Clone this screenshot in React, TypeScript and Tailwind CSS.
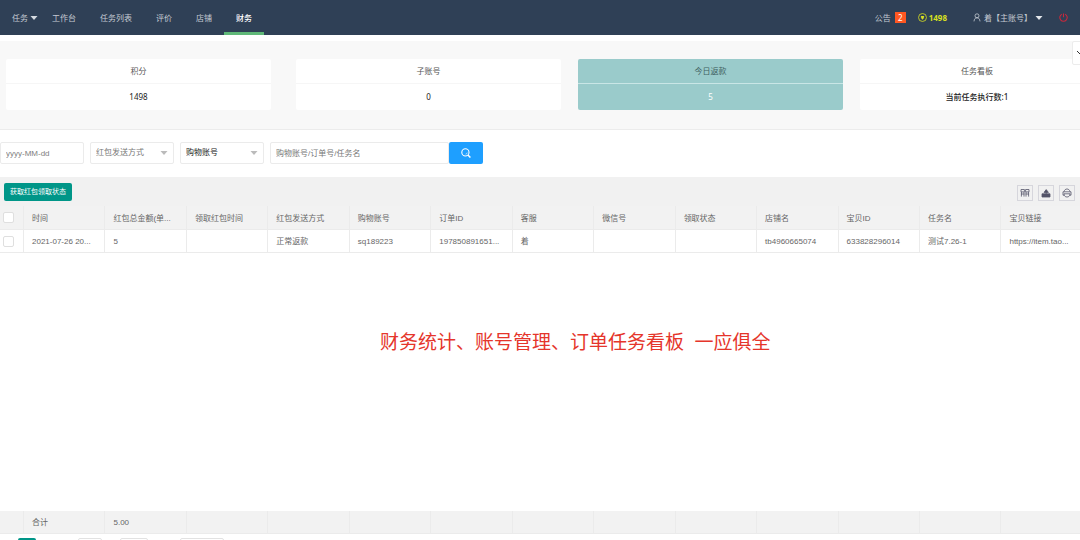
import type { ReactNode } from "react";

const navItems = ["任务", "工作台", "任务列表", "评价", "店铺", "财务"];

const columns = [
  { title: "时间", value: "2021-07-26 20...", total: "合计" },
  { title: "红包总金额(单...", value: "5", total: "5.00" },
  { title: "领取红包时间", value: "", total: "" },
  { title: "红包发送方式", value: "正常返款", total: "" },
  { title: "购物账号", value: "sq189223", total: "" },
  { title: "订单ID", value: "197850891651...", total: "" },
  { title: "客服", value: "着", total: "" },
  { title: "微信号", value: "", total: "" },
  { title: "领取状态", value: "", total: "" },
  { title: "店铺名", value: "tb4960665074", total: "" },
  { title: "宝贝ID", value: "633828296014", total: "" },
  { title: "任务名", value: "测试7.26-1", total: "" },
  { title: "宝贝链接", value: "https://item.tao...", total: "" },
];

const Caret = ({ className }: { className: string }) => (
  <svg viewBox="0 0 8 4" className={`h-1 w-2 ${className}`} fill="currentColor">
    <path d="M0.5 0h7L4 4z" />
  </svg>
);

const TopNav = () => (
  <header className="flex h-[35px] shrink-0 items-stretch justify-between bg-[#2f4056] text-[#c5cbd3]">
    <nav className="flex">
      {navItems.map((item) => {
        const active = item === "财务";
        return (
          <a key={item} href="#" className={`relative flex items-center px-3 ${active ? "font-medium text-white" : ""}`}>
            {item}
            {item === "任务" && <Caret className="absolute right-0.5 text-[#d5dae0]" />}
            {active && <span className="absolute inset-x-0 bottom-0 h-[3px] bg-[#5fb878]" />}
          </a>
        );
      })}
    </nav>
    <div className="flex items-center pr-3">
      <a href="#" className="flex items-center gap-1">
        公告
        <span className="h-[11px] w-[11px] bg-[#ff5722] text-center leading-[11px] text-white">2</span>
      </a>
      <span className="ml-3 flex items-center gap-0.5 font-bold text-[#d9e021]">
        <svg viewBox="0 0 10 10" className="h-[9px] w-[9px]" fill="none" stroke="currentColor">
          <circle cx="5" cy="5" r="4.4" strokeWidth="0.9" />
          <path d="M3 3.2h4L6.2 5H7L5 7.4 3 5h0.8z" fill="currentColor" stroke="none" />
        </svg>
        1498
      </span>
      <a href="#" className="ml-[26px] flex items-center gap-[3px]">
        <svg viewBox="0 0 8 9" className="h-[9px] w-2" fill="none" stroke="currentColor" strokeWidth="0.8">
          <circle cx="4" cy="2.8" r="2" />
          <path d="M1 8.4c0.2-2.4 1.2-3.6 3-3.6s2.8 1.2 3 3.6" />
        </svg>
        着【主账号】
        <Caret className="text-[#e4e7eb]" />
      </a>
      <button type="button" aria-label="退出" className="ml-4 text-[#c8283c]">
        <svg viewBox="0 0 10 10" className="h-[9px] w-[9px]" fill="none" stroke="currentColor" strokeWidth="1.2">
          <path d="M3.2 1.3a4.1 4.1 0 1 0 3.6 0M5 0.6v4" />
        </svg>
      </button>
    </div>
  </header>
);

type CardProps = { title: string; value: string; className?: string; highlight?: boolean; bold?: boolean };

const StatCard = ({ title, value, className = "", highlight, bold }: CardProps) => (
  <div className={`rounded-xs text-center ${highlight ? "bg-[#9acbcb]" : "bg-white"} ${className}`}>
    <h2 className={`h-[25px] border-b leading-6 ${highlight ? "border-[#c9e6e6] text-[#3f5f5f]" : "border-[#f6f6f6] text-[#555]"}`}>
      {title}
    </h2>
    <p className={`h-[26px] leading-[26px] ${highlight ? "text-white" : "text-[#222]"} ${bold ? "font-medium" : ""}`}>{value}</p>
  </div>
);

const Stats = () => (
  <section className="relative shrink-0 overflow-hidden border-b border-[#ececec] bg-[#f8f8f8]">
    <div className="h-1.5 bg-white" />
    <div className="-mr-[14px] grid grid-cols-[273fr_265fr_265fr_234fr] gap-[17px] pt-[18px] pb-[19px] pl-1.5">
      <StatCard title="积分" value="1498" className="mr-2" />
      <StatCard title="子账号" value="0" />
      <StatCard title="今日返款" value="5" highlight />
      <StatCard title="任务看板" value="当前任务执行数:1" bold />
    </div>
    <button type="button" aria-label="展开" className="absolute top-1.5 -right-2 flex h-6 w-4 items-center justify-center rounded-xs border border-[#ececec] bg-white text-[#333]">
      <svg viewBox="0 0 8 6" className="h-1.5 w-2" fill="none" stroke="currentColor">
        <path d="M1 1l3 3 3-3" />
      </svg>
    </button>
  </section>
);

const FilterSelect = ({ label, text }: { label: string; text: string }) => (
  <div className="relative">
    <select
      aria-label={label}
      className={`h-[22px] w-[84px] appearance-none rounded-xs border border-[#ebebeb] bg-white pl-[5px] ${label === text ? "text-[#777]" : "text-[#222]"}`}
    >
      <option>{text}</option>
    </select>
    <Caret className="pointer-events-none absolute top-[9px] right-1.5 text-[#bbb]" />
  </div>
);

const Filters = () => (
  <form className="flex shrink-0 gap-1.5 pt-3 pb-[13px]">
    <input
      aria-label="日期"
      placeholder="yyyy-MM-dd"
      className="h-[22px] w-[84px] rounded-xs border border-[#ebebeb] pl-[5px] placeholder:text-[#808080]"
    />
    <FilterSelect label="红包发送方式" text="红包发送方式" />
    <FilterSelect label="查询类型" text="购物账号" />
    <div className="flex">
      <input
        aria-label="关键字"
        placeholder="购物账号/订单号/任务名"
        className="h-[22px] w-[179px] rounded-xs border border-[#ebebeb] pl-[5px] placeholder:text-[#777]"
      />
      <button type="button" aria-label="搜索" className="flex h-[22px] w-[34px] items-center justify-center rounded-xs bg-[#1e9fff] text-white">
        <svg viewBox="0 0 10 10" className="h-2.5 w-2.5" fill="none" stroke="currentColor" strokeWidth="1.1">
          <circle cx="4.4" cy="4.4" r="3.6" />
          <path d="M6.9 7L9.4 9.5" strokeWidth="1.5" />
          <path d="M4.6 6.2a1.8 1.8 0 0 0 1.6-1.6" strokeWidth="0.6" />
        </svg>
      </button>
    </div>
  </form>
);

const ToolButton = ({ label, children }: { label: string; children: ReactNode }) => (
  <button type="button" aria-label={label} className="flex h-4 w-4 items-center justify-center border border-[#d6d6dc] text-[#55556a]">
    <svg viewBox="0 0 10 10" className="h-2.5 w-2.5" fill="none" stroke="currentColor" strokeWidth="0.8">
      {children}
    </svg>
  </button>
);

const Toolbar = () => (
  <div className="flex h-[29px] shrink-0 items-center justify-between bg-[#f1f1f1] pr-[5px] pl-1">
    <button type="button" className="h-[18px] rounded-xs bg-[#009688] px-1.5 text-[7px] text-white">
      获取红包领取状态
    </button>
    <div className="flex gap-[5px] pt-0.5">
      <ToolButton label="筛选列">
        <path d="M1 1.5h3.4v2.4H1zM5.6 1.5H9v2.4H5.6zM1.4 4v4.6M4 4v4.6M6 4v4.6M8.6 4v4.6M1 6h3.4M5.6 6H9" />
      </ToolButton>
      <ToolButton label="导出">
        <path d="M1 5.8h8V9H1z" fill="currentColor" />
        <path d="M3 4.4L5.2 1.6 7.4 4.4z" fill="currentColor" />
        <path d="M5.2 4v2" />
      </ToolButton>
      <ToolButton label="打印">
        <path d="M2 3.6C2.6 1.8 3.6 1 5 1s2.4 0.8 3 2.6M2 7.2H1V3.8h8v3.4H8M2 5.8h6C8 7.8 6.8 9 5 9S2 7.8 2 5.8z" />
      </ToolButton>
    </div>
  </div>
);

const cell = "truncate border-r border-b border-[#ebebeb] px-2 pt-0.5 text-left font-normal";

const CheckCell = ({ label }: { label: string }) => (
  <input type="checkbox" aria-label={label} className="block h-[11px] w-[11px] appearance-none rounded-xs border border-[#dfdfdf] bg-white" />
);

const DataTable = () => (
  <div className="flex min-h-0 flex-1 flex-col overflow-hidden text-[#666]">
    <table className="w-[calc(100%+3px)] table-fixed border-separate border-spacing-0">
      <thead>
        <tr className="h-6 bg-[#f2f2f2]">
          <th className="w-6 border-r border-b border-[#ebebeb] pl-[3px]">
            <CheckCell label="全选" />
          </th>
          {columns.map((c) => (
            <th key={c.title} className={cell}>{c.title}</th>
          ))}
        </tr>
      </thead>
      <tbody>
        <tr className="h-[23px]">
          <td className="border-r border-b border-[#ebebeb] pl-[3px]">
            <CheckCell label="选择" />
          </td>
          {columns.map((c) => (
            <td key={c.title} className={cell}>{c.value}</td>
          ))}
        </tr>
      </tbody>
    </table>
    <p className="pt-[76px] pl-[380px] text-[19px] leading-7 whitespace-pre text-[#e5352b]">
      财务统计、账号管理、订单任务看板{"  "}一应俱全
    </p>
    <table className="mt-auto w-[calc(100%+3px)] table-fixed border-separate border-spacing-0">
      <tbody>
        <tr className="h-[23px] bg-[#f2f2f2]">
          <td className="w-6 border-r border-b border-[#ebebeb]" />
          {columns.map((c) => (
            <td key={c.title} className={cell}>{c.total}</td>
          ))}
        </tr>
      </tbody>
    </table>
  </div>
);

const Pager = () => (
  <footer className="flex h-1.5 shrink-0 items-start overflow-hidden pt-1 pl-[18px]">
    <button type="button" aria-label="第1页" className="h-4 w-[18px] shrink-0 rounded-xs bg-[#009688]" />
    <input aria-label="页码" className="ml-[42px] h-4 w-6 shrink-0 rounded-xs border border-[#e2e2e2]" />
    <button type="button" aria-label="确定" className="ml-[18px] h-4 w-7 shrink-0 rounded-xs border border-[#e2e2e2]" />
    <select aria-label="每页条数" className="ml-8 h-4 w-11 shrink-0 appearance-none rounded-xs border border-[#e2e2e2]" />
  </footer>
);

export default function App() {
  return (
    <div className="flex h-screen flex-col overflow-hidden bg-white font-['Liberation_Sans','Noto_Sans_CJK_SC',sans-serif] text-[8px] leading-3">
      <div className="shrink-0 font-['Noto_Sans','Noto_Sans_CJK_SC',sans-serif]">
        <TopNav />
        <Stats />
      </div>
      <Filters />
      <Toolbar />
      <DataTable />
      <Pager />
    </div>
  );
}
